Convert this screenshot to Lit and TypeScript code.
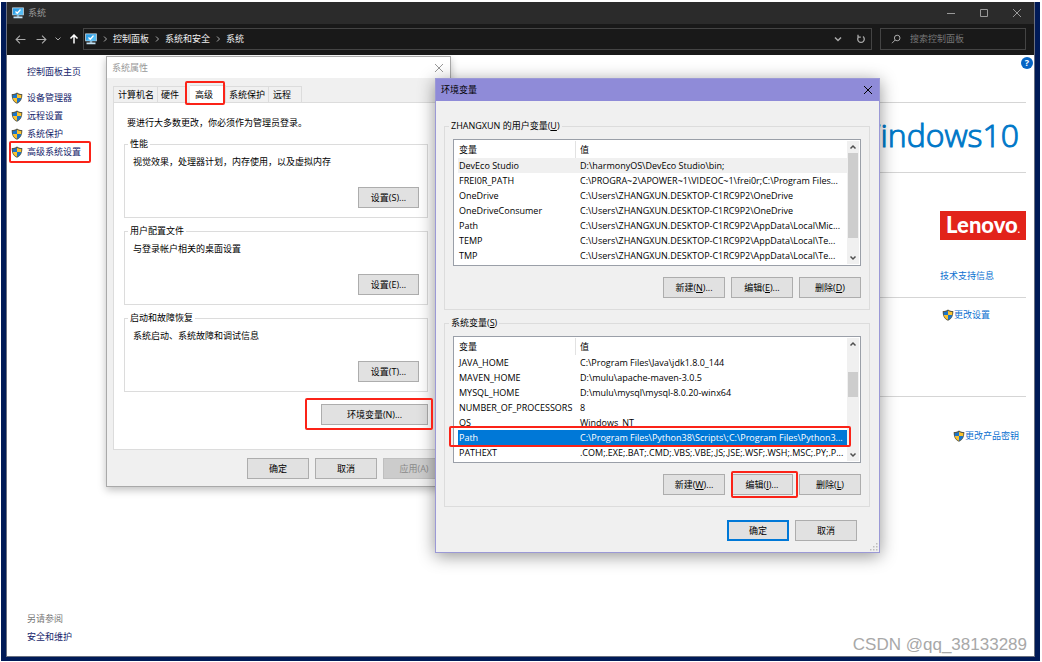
import { LitElement, html, css, svg, nothing } from "lit";
import { customElement, property } from "lit/decorators.js";
import { classMap } from "lit/directives/class-map.js";

const baseStyles = css`
  * {
    box-sizing: border-box;
  }
  button,
  input,
  a {
    font: inherit;
    color: inherit;
    text-decoration: none;
  }
  .marked {
    position: relative;
  }
  .mark {
    position: absolute;
    border: 2px solid #fb2318;
    border-radius: 2px;
    pointer-events: none;
    z-index: 2;
  }
  .button {
    width: 62px;
    height: 21px;
    padding: 0;
    border: 1px solid #adadad;
    background: #e1e1e1;
    color: #000;
    line-height: 12px;
    white-space: nowrap;
  }
  .button.default {
    border: 2px solid #0078d7;
  }
  .button:disabled {
    border-color: #bfbfbf;
    background: #cccccc;
    color: #8a8a8a;
  }
  .group {
    min-width: 0;
    margin: 0;
    border: 1px solid #dcdcdc;
  }
  .group legend {
    padding: 0 2px;
    line-height: 12px;
  }
  .close {
    display: flex;
    padding: 0;
    border: 0;
    background: none;
  }
`;

const shield = () => html`<svg width="12" height="12" viewBox="0 0 24 24" aria-hidden="true">
  <path d="M12 1 C9 3 5 4 1.5 4 C1 13 4 20 12 23.500 C20 20 23 13 22.500 4 C19 4 15 3 12 1Z" fill="#5a5848" />
  <path d="M12 3.500 C9.500 5 7 6 3.500 6 V12 H12Z" fill="#1b75c9" />
  <path d="M12 3.500 C14.500 5 17 6 20.500 6 V12 H12Z" fill="#fcc32d" />
  <path d="M3.700 12 C4.500 16.500 7 19.500 12 21.500 V12Z" fill="#fcc32d" />
  <path d="M20.300 12 C19.500 16.500 17 19.500 12 21.500 V12Z" fill="#1b75c9" />
</svg>`;

const monitor = () => html`<svg width="12" height="12" viewBox="0 0 24 24" aria-hidden="true">
  <rect x="0.500" y="1" width="23" height="15.500" fill="#d7eefb" />
  <rect x="2" y="2.500" width="20" height="12.500" fill="#2f9fe6" />
  <path d="M2 15 L22 2.500 V15Z" fill="#55bdf5" />
  <path d="M7 9 L10.500 12.500 L17 5" fill="none" stroke="#fff" stroke-width="2.500" />
  <rect x="9.500" y="16.500" width="5" height="3" fill="#9fc9e2" />
  <rect x="3" y="19" width="18" height="3.500" fill="#c3e2f3" />
</svg>`;

const stroked = (path: string, size = 10, width = 1) => html`<svg
  width=${size}
  height=${size}
  viewBox="0 0 10 10"
  fill="none"
  stroke="currentColor"
  stroke-width=${width}
  aria-hidden="true"
>
  ${svg`<path d=${path} />`}
</svg>`;

const CROSS = "M1 1 L9 9 M9 1 L1 9";
const CHEVRON_DOWN = "M2.5 3.500 L5 6 L7.500 3.500";
const CHEVRON_UP = "M2.5 6.500 L5 4 L7.500 6.500";
const CHEVRON_RIGHT = "M4 2.500 L6.500 5 L4 7.500";

@customElement("variable-list")
export class VariableList extends LitElement {
  static styles = [
    baseStyles,
    css`
      :host {
        display: flex;
        height: 127px;
        padding: 1px 1px 1px 4px;
        border: 1px solid #9a9fa8;
        background: #fff;
      }
      .table {
        width: 100%;
        table-layout: fixed;
        border-collapse: collapse;
        align-self: flex-start;
      }
      .name {
        width: 121px;
      }
      th,
      td {
        padding: 0 0 0 1px;
        text-align: left;
        font-weight: 400;
        white-space: nowrap;
      }
      th {
        height: 17px;
      }
      td {
        height: 15px;
        line-height: 15px;
      }
      .divider {
        display: block;
        margin-right: 3px;
        border-right: 1px solid #e2e2e2;
        line-height: 17px;
      }
      .hover {
        background: #f0f0f0;
      }
      .selected {
        background: #0078d7;
        color: #fff;
      }
      .holder {
        position: relative;
        display: flex;
        flex: 1;
        min-width: 0;
      }
      .row-mark {
        left: -9px;
        right: -4px;
        top: 88px;
        height: 21px;
      }
      .scrollbar {
        display: flex;
        flex-direction: column;
        width: 12px;
        background: #f0f0f0;
        color: #505050;
      }
      .arrow {
        display: flex;
        padding: 1px;
        border: 0;
        background: none;
      }
      .track {
        flex: 1;
        padding: 0 1px;
      }
      .thumb {
        background: #cdcdcd;
      }
    `,
  ];

  @property({ attribute: false }) rows: string[][] = [];
  @property({ type: Number }) hovered = -1;
  @property({ type: Number }) selected = -1;
  @property({ type: Number }) thumbStart = 0;
  @property({ type: Number }) thumbSize = 50;

  render() {
    return html`
      <div class="holder">
        <table class="table">
          <thead>
            <tr>
              <th class="name"><span class="divider">变量</span></th>
              <th>值</th>
            </tr>
          </thead>
          <tbody>
            ${this.rows.map(
              (row, i) => html`<tr class=${classMap({ hover: i === this.hovered, selected: i === this.selected })}>
                <td>${row[0]}</td>
                <td>${row[1]}</td>
              </tr>`
            )}
          </tbody>
        </table>
        ${this.selected >= 0 ? html`<span class="mark row-mark"></span>` : nothing}
      </div>
      <div class="scrollbar">
        <button class="arrow" aria-label="向上">${stroked(CHEVRON_UP, 10, 1.5)}</button>
        <div class="track">
          <div style="height:${this.thumbStart}%"></div>
          <div class="thumb" style="height:${this.thumbSize}%"></div>
        </div>
        <button class="arrow" aria-label="向下">${stroked(CHEVRON_DOWN, 10, 1.5)}</button>
      </div>
    `;
  }
}

@customElement("system-properties")
export class SystemProperties extends LitElement {
  static styles = [
    baseStyles,
    css`
      :host {
        display: block;
        border: 1px solid #a9a9a9;
        background: #f0f0f0;
        box-shadow: 0 3px 8px rgba(0, 0, 0, 0.25);
      }
      .title {
        display: flex;
        align-items: center;
        justify-content: space-between;
        height: 21px;
        padding: 0 6px 0 5px;
        background: #fff;
        color: #999;
      }
      .body {
        padding: 8px 5px 7px 6px;
      }
      .tabs {
        display: flex;
        align-items: flex-end;
      }
      .tab {
        min-width: 28px;
        height: 16px;
        padding: 0 3px;
        border: 1px solid #dcdcdc;
        border-bottom: 0;
        border-left: 0;
        background: #f0f0f0;
        line-height: 14px;
        text-align: left;
        color: #000;
      }
      .tab:first-child {
        padding-left: 4px;
        border-left: 1px solid #dcdcdc;
      }
      .tab:last-child {
        padding: 0 10px 0 4px;
      }
      .active {
        width: 36px;
        height: 18px;
        margin: -2px 0 -1px 4px;
        padding: 0 5px;
        background: #fff;
      }
      .tab-mark {
        inset: -5px 0 -2px -5px;
      }
      .panel {
        display: flex;
        flex-direction: column;
        gap: 7px;
        height: 348px;
        padding: 14px 16px 0 10px;
        border: 1px solid #dcdcdc;
        background: #fff;
      }
      .hint {
        margin: 0 3px;
        line-height: 12px;
      }
      .hint + .group {
        margin-top: 2px;
      }
      .panel .group {
        height: 80px;
        padding: 6px 8px 10px 7px;
        display: flex;
        flex-direction: column;
      }
      .group legend {
        margin-left: -4px;
      }
      .description {
        margin: 0 0 19px 1px;
        line-height: 12px;
      }
      .group .button {
        display: block;
        width: 61px;
        margin-left: auto;
      }
      .environment {
        align-self: flex-end;
        width: 107px;
        margin-top: 5px;
      }
      .environment .button {
        width: 100%;
      }
      .environment-mark {
        inset: -6px -5px -5px -16px;
      }
      .actions {
        display: flex;
        justify-content: flex-end;
        gap: 6px;
        padding-top: 8px;
      }
    `,
  ];

  private groups = [
    ["性能", "视觉效果，处理器计划，内存使用，以及虚拟内存", "设置(S)..."],
    ["用户配置文件", "与登录帐户相关的桌面设置", "设置(E)..."],
    ["启动和故障恢复", "系统启动、系统故障和调试信息", "设置(T)..."],
  ];

  render() {
    return html`
      <div class="title">
        <span>系统属性</span>
        <button class="close" aria-label="关闭">${stroked(CROSS)}</button>
      </div>
      <div class="body">
        <div class="tabs" role="tablist">
          ${["计算机名", "硬件", "高级", "系统保护", "远程"].map((name) =>
            name === "高级"
              ? html`<button class="tab active marked" role="tab" aria-selected="true">
                  ${name}<span class="mark tab-mark"></span>
                </button>`
              : html`<button class="tab" role="tab">${name}</button>`
          )}
        </div>
        <div class="panel">
          <p class="hint">要进行大多数更改，你必须作为管理员登录。</p>
          ${this.groups.map(
            ([name, description, action]) => html`<fieldset class="group">
              <legend>${name}</legend>
              <p class="description">${description}</p>
              <button class="button">${action}</button>
            </fieldset>`
          )}
          <div class="environment marked">
            <button class="button">环境变量(N)...</button>
            <span class="mark environment-mark"></span>
          </div>
        </div>
        <div class="actions">
          <button class="button">确定</button>
          <button class="button">取消</button>
          <button class="button" disabled>应用(A)</button>
        </div>
      </div>
    `;
  }
}

@customElement("environment-variables")
export class EnvironmentVariables extends LitElement {
  static styles = [
    baseStyles,
    css`
      :host {
        display: block;
        border: 1px solid #9b99d6;
        background: #f0f0f0;
        box-shadow: 0 3px 16px rgba(0, 0, 0, 0.42);
      }
      .title {
        display: flex;
        align-items: center;
        justify-content: space-between;
        height: 22px;
        padding: 0 6px 0 5px;
        background: #8f8bd8;
      }
      .body {
        display: flex;
        flex-direction: column;
        gap: 7px;
        padding: 19px 9px 11px 8px;
      }
      .group {
        padding: 7px 8px 11px;
      }
      .group legend {
        margin-left: -4px;
      }
      .actions {
        display: flex;
        justify-content: flex-end;
        gap: 6px;
        margin-top: 11px;
      }
      .confirm {
        display: flex;
        justify-content: flex-end;
        gap: 6px;
        padding: 6px 13px 0 0;
      }
      .edit-mark {
        inset: -3px -5px -3px 0;
      }
      .marked {
        display: flex;
      }
      .grip {
        position: absolute;
        right: 1px;
        bottom: 1px;
      }
    `,
  ];

  private user = [
    ["DevEco Studio", "D:\\harmonyOS\\DevEco Studio\\bin;"],
    ["FREI0R_PATH", "C:\\PROGRA~2\\APOWER~1\\VIDEOC~1\\frei0r;C:\\Program Files..."],
    ["OneDrive", "C:\\Users\\ZHANGXUN.DESKTOP-C1RC9P2\\OneDrive"],
    ["OneDriveConsumer", "C:\\Users\\ZHANGXUN.DESKTOP-C1RC9P2\\OneDrive"],
    ["Path", "C:\\Users\\ZHANGXUN.DESKTOP-C1RC9P2\\AppData\\Local\\Mic..."],
    ["TEMP", "C:\\Users\\ZHANGXUN.DESKTOP-C1RC9P2\\AppData\\Local\\Te..."],
    ["TMP", "C:\\Users\\ZHANGXUN.DESKTOP-C1RC9P2\\AppData\\Local\\Te..."],
  ];

  private system = [
    ["JAVA_HOME", "C:\\Program Files\\Java\\jdk1.8.0_144"],
    ["MAVEN_HOME", "D:\\mulu\\apache-maven-3.0.5"],
    ["MYSQL_HOME", "D:\\mulu\\mysql\\mysql-8.0.20-winx64"],
    ["NUMBER_OF_PROCESSORS", "8"],
    ["OS", "Windows_NT"],
    ["Path", "C:\\Program Files\\Python38\\Scripts\\;C:\\Program Files\\Python3..."],
    ["PATHEXT", ".COM;.EXE;.BAT;.CMD;.VBS;.VBE;.JS;.JSE;.WSF;.WSH;.MSC;.PY;.P..."],
  ];

  render() {
    return html`
      <div class="title">
        <span>环境变量</span>
        <button class="close" aria-label="关闭">${stroked(CROSS)}</button>
      </div>
      <div class="body">
        <fieldset class="group">
          <legend>ZHANGXUN 的用户变量(<u>U</u>)</legend>
          <variable-list .rows=${this.user} .hovered=${0} .thumbStart=${0} .thumbSize=${86}></variable-list>
          <div class="actions">
            <button class="button">新建(<u>N</u>)...</button>
            <button class="button">编辑(<u>E</u>)...</button>
            <button class="button">删除(<u>D</u>)</button>
          </div>
        </fieldset>
        <fieldset class="group">
          <legend>系统变量(<u>S</u>)</legend>
          <variable-list .rows=${this.system} .selected=${5} .thumbStart=${22} .thumbSize=${25}></variable-list>
          <div class="actions">
            <button class="button">新建(<u>W</u>)...</button>
            <span class="marked">
              <button class="button">编辑(<u>I</u>)...</button>
              <span class="mark edit-mark"></span>
            </span>
            <button class="button">删除(<u>L</u>)</button>
          </div>
        </fieldset>
        <div class="confirm">
          <button class="button default">确定</button>
          <button class="button">取消</button>
        </div>
      </div>
      <svg class="grip" width="8" height="8" viewBox="0 0 8 8" fill="#bdbdbd" aria-hidden="true">
        <path d="M6 0h1.500v1.500H6zM6 3h1.500v1.500H6zM6 6h1.500v1.500H6zM3 3h1.500v1.500H3zM3 6h1.500v1.500H3zM0 6h1.500v1.500H0z" />
      </svg>
    `;
  }
}

@customElement("app-root")
export class AppRoot extends LitElement {
  static styles = [
    baseStyles,
    css`
      :host {
        display: flex;
        box-sizing: border-box;
        min-height: 100vh;
        padding: 2px 2px 1px 1px;
        background: #fff;
        font: 9px/12px "Open Sans", "Noto Sans CJK SC", sans-serif;
        color: #000;
      }
      .desktop {
        display: flex;
        flex: 1;
        padding: 0 5px 4px;
        background: #001a57;
      }
      .window {
        display: flex;
        flex: 1;
        flex-direction: column;
        border: 1px solid #6a7080;
        border-top: 0;
        background: #fff;
      }
      .titlebar {
        display: flex;
        align-items: center;
        gap: 4px;
        height: 22px;
        padding: 0 12px 0 5px;
        background: #2b2b2b;
        color: #999;
      }
      .window-buttons {
        display: flex;
        gap: 23px;
        margin-left: auto;
      }
      .icon-button {
        display: flex;
        padding: 0;
        border: 0;
        background: none;
      }
      .navigation {
        display: flex;
        align-items: center;
        height: 31px;
        padding: 0 8px 1px;
        background: #191919;
        color: #aaa;
      }
      .history {
        display: flex;
        align-items: center;
        gap: 10px;
        width: 68px;
      }
      .history .icon-button:nth-child(3) {
        margin: 0 -4px;
      }
      .up {
        color: #fff;
      }
      .address,
      .search {
        display: flex;
        align-items: center;
        height: 22px;
        border: 1px solid #444;
      }
      .address {
        flex: 1;
        gap: 3px;
        padding: 0 5px 0 1px;
      }
      .address a {
        color: #f0f0f0;
      }
      .address-tools {
        display: flex;
        gap: 13px;
        margin-left: auto;
      }
      .search {
        gap: 9px;
        width: 146px;
        margin-left: 8px;
        padding: 0 10px;
      }
      .search input {
        flex: 1;
        min-width: 0;
        padding: 0;
        border: 0;
        background: none;
        outline: 0;
      }
      .search input::placeholder {
        color: #777;
        opacity: 1;
      }
      .content {
        position: relative;
        display: flex;
        flex: 1;
        overflow: hidden;
      }
      .sidebar {
        display: flex;
        flex-direction: column;
        justify-content: space-between;
        width: 100px;
        padding: 11px 0 13px 4px;
        color: #15246b;
      }
      .links,
      .related {
        display: flex;
        flex-direction: column;
        gap: 6px;
      }
      .home {
        padding-left: 16px;
        margin-bottom: 8px;
      }
      .task {
        display: flex;
        align-items: center;
        gap: 4px;
      }
      .sidebar-mark {
        inset: -5px 16px -5px -2px;
      }
      .related {
        padding-left: 16px;
      }
      .muted {
        color: #777;
      }
      .details {
        flex: 1;
        padding-right: 8px;
        color: #0a6fd0;
      }
      .section {
        display: flex;
        flex-direction: column;
        align-items: flex-end;
        border-bottom: 1px solid #d5d5d5;
      }
      .section:last-child {
        border: 0;
      }
      .help {
        display: grid;
        place-items: center;
        width: 12px;
        height: 12px;
        margin: 2px -7px 33px 0;
        padding: 0;
        border: 0;
        border-radius: 50%;
        background: #0765c4;
        color: #fff;
        font-weight: 700;
      }
      .brand {
        padding: 8px 7px 13px 0;
        font: 300 32px/48px "Open Sans", sans-serif;
        -webkit-text-stroke: 1px #0078c8;
        color: #0078c8;
        white-space: nowrap;
      }
      .vendor {
        align-self: flex-end;
        width: 86px;
        padding: 38px 0 15px;
      }
      .lenovo {
        height: 29px;
        margin-bottom: 30px;
        background: #e2231a;
        color: #fff;
        font: 900 22px/28px Lato, sans-serif;
        text-align: center;
      }
      .trademark {
        font-size: 9px;
      }
      .shielded {
        display: flex;
        align-items: center;
      }
      .settings {
        padding: 11px 36px 75px 0;
      }
      .product-key {
        padding: 33px 7px 0 0;
      }
      .properties {
        position: absolute;
        left: 99px;
        top: 1px;
        width: 345px;
      }
      .variables {
        position: absolute;
        left: 428px;
        top: 23px;
        width: 445px;
      }
      .watermark {
        position: absolute;
        right: 7px;
        bottom: 1px;
        font: 17px/20px "Liberation Sans", sans-serif;
        color: #a8a8a8;
        text-shadow: 1px 1px 0 #fff;
      }
    `,
  ];

  render() {
    return html`
      <div class="desktop">
        <div class="window">
          <header class="titlebar">
            ${monitor()}<span>系统</span>
            <div class="window-buttons">
              <button class="icon-button" aria-label="最小化">${stroked("M1 5.500 H9")}</button>
              <button class="icon-button" aria-label="最大化">${stroked("M1.500 1.500 H8.500 V8.500 H1.500Z")}</button>
              <button class="icon-button" aria-label="关闭">${stroked(CROSS)}</button>
            </div>
          </header>
          <nav class="navigation">
            <div class="history">
              <button class="icon-button" aria-label="后退">${stroked("M9.500 5 H1 M4.500 1.500 L1 5 L4.500 8.500", 11)}</button>
              <button class="icon-button" aria-label="前进">${stroked("M0.500 5 H9 M5.500 1.500 L9 5 L5.500 8.500", 11)}</button>
              <button class="icon-button" aria-label="最近">${stroked(CHEVRON_DOWN)}</button>
              <button class="icon-button up" aria-label="向上">${stroked("M5 9.500 V1 M1.500 4.500 L5 1 L8.500 4.500", 10, 1.5)}</button>
            </div>
            <div class="address">
              ${monitor()}${stroked(CHEVRON_RIGHT)}
              <a href="#">控制面板</a>${stroked(CHEVRON_RIGHT)}
              <a href="#">系统和安全</a>${stroked(CHEVRON_RIGHT)}
              <a href="#">系统</a>
              <div class="address-tools">
                <button class="icon-button" aria-label="展开">${stroked("M2 3.500 L5 6.500 L8 3.500", 10, 1.5)}</button>
                <button class="icon-button" aria-label="刷新">
                  ${stroked("M3 2.500 A3.300 3.300 0 1 0 7 2.500 M2 0.800 V3.200 H4.800", 10, 1.3)}
                </button>
              </div>
            </div>
            <label class="search">
              ${stroked("M9 4 A2.800 2.800 0 1 1 3.400 4 A2.800 2.800 0 1 1 9 4 M4.200 6 L1 9.200")}
              <input type="search" placeholder="搜索控制面板" aria-label="搜索控制面板" />
            </label>
          </nav>
          <main class="content">
            <aside class="sidebar">
              <div class="links">
                <a class="home" href="#">控制面板主页</a>
                <a class="task" href="#">${shield()}设备管理器</a>
                <a class="task" href="#">${shield()}远程设置</a>
                <a class="task" href="#">${shield()}系统保护</a>
                <a class="task marked" href="#">${shield()}高级系统设置<span class="mark sidebar-mark"></span></a>
              </div>
              <div class="related">
                <span class="muted">另请参阅</span>
                <a href="#">安全和维护</a>
              </div>
            </aside>
            <div class="details">
              <section class="section"><button class="help" aria-label="帮助">?</button></section>
              <section class="section"><div class="brand">Windows10</div></section>
              <section class="section">
                <div class="vendor">
                  <div class="lenovo">Lenovo<span class="trademark">.</span></div>
                  <a href="#">技术支持信息</a>
                </div>
              </section>
              <section class="section">
                <a class="shielded settings" href="#">${shield()}更改设置</a>
              </section>
              <section class="section">
                <a class="shielded product-key" href="#">${shield()}更改产品密钥</a>
              </section>
            </div>
            <system-properties class="properties"></system-properties>
            <environment-variables class="variables"></environment-variables>
            <span class="watermark">CSDN @qq_38133289</span>
          </main>
        </div>
      </div>
    `;
  }
}
